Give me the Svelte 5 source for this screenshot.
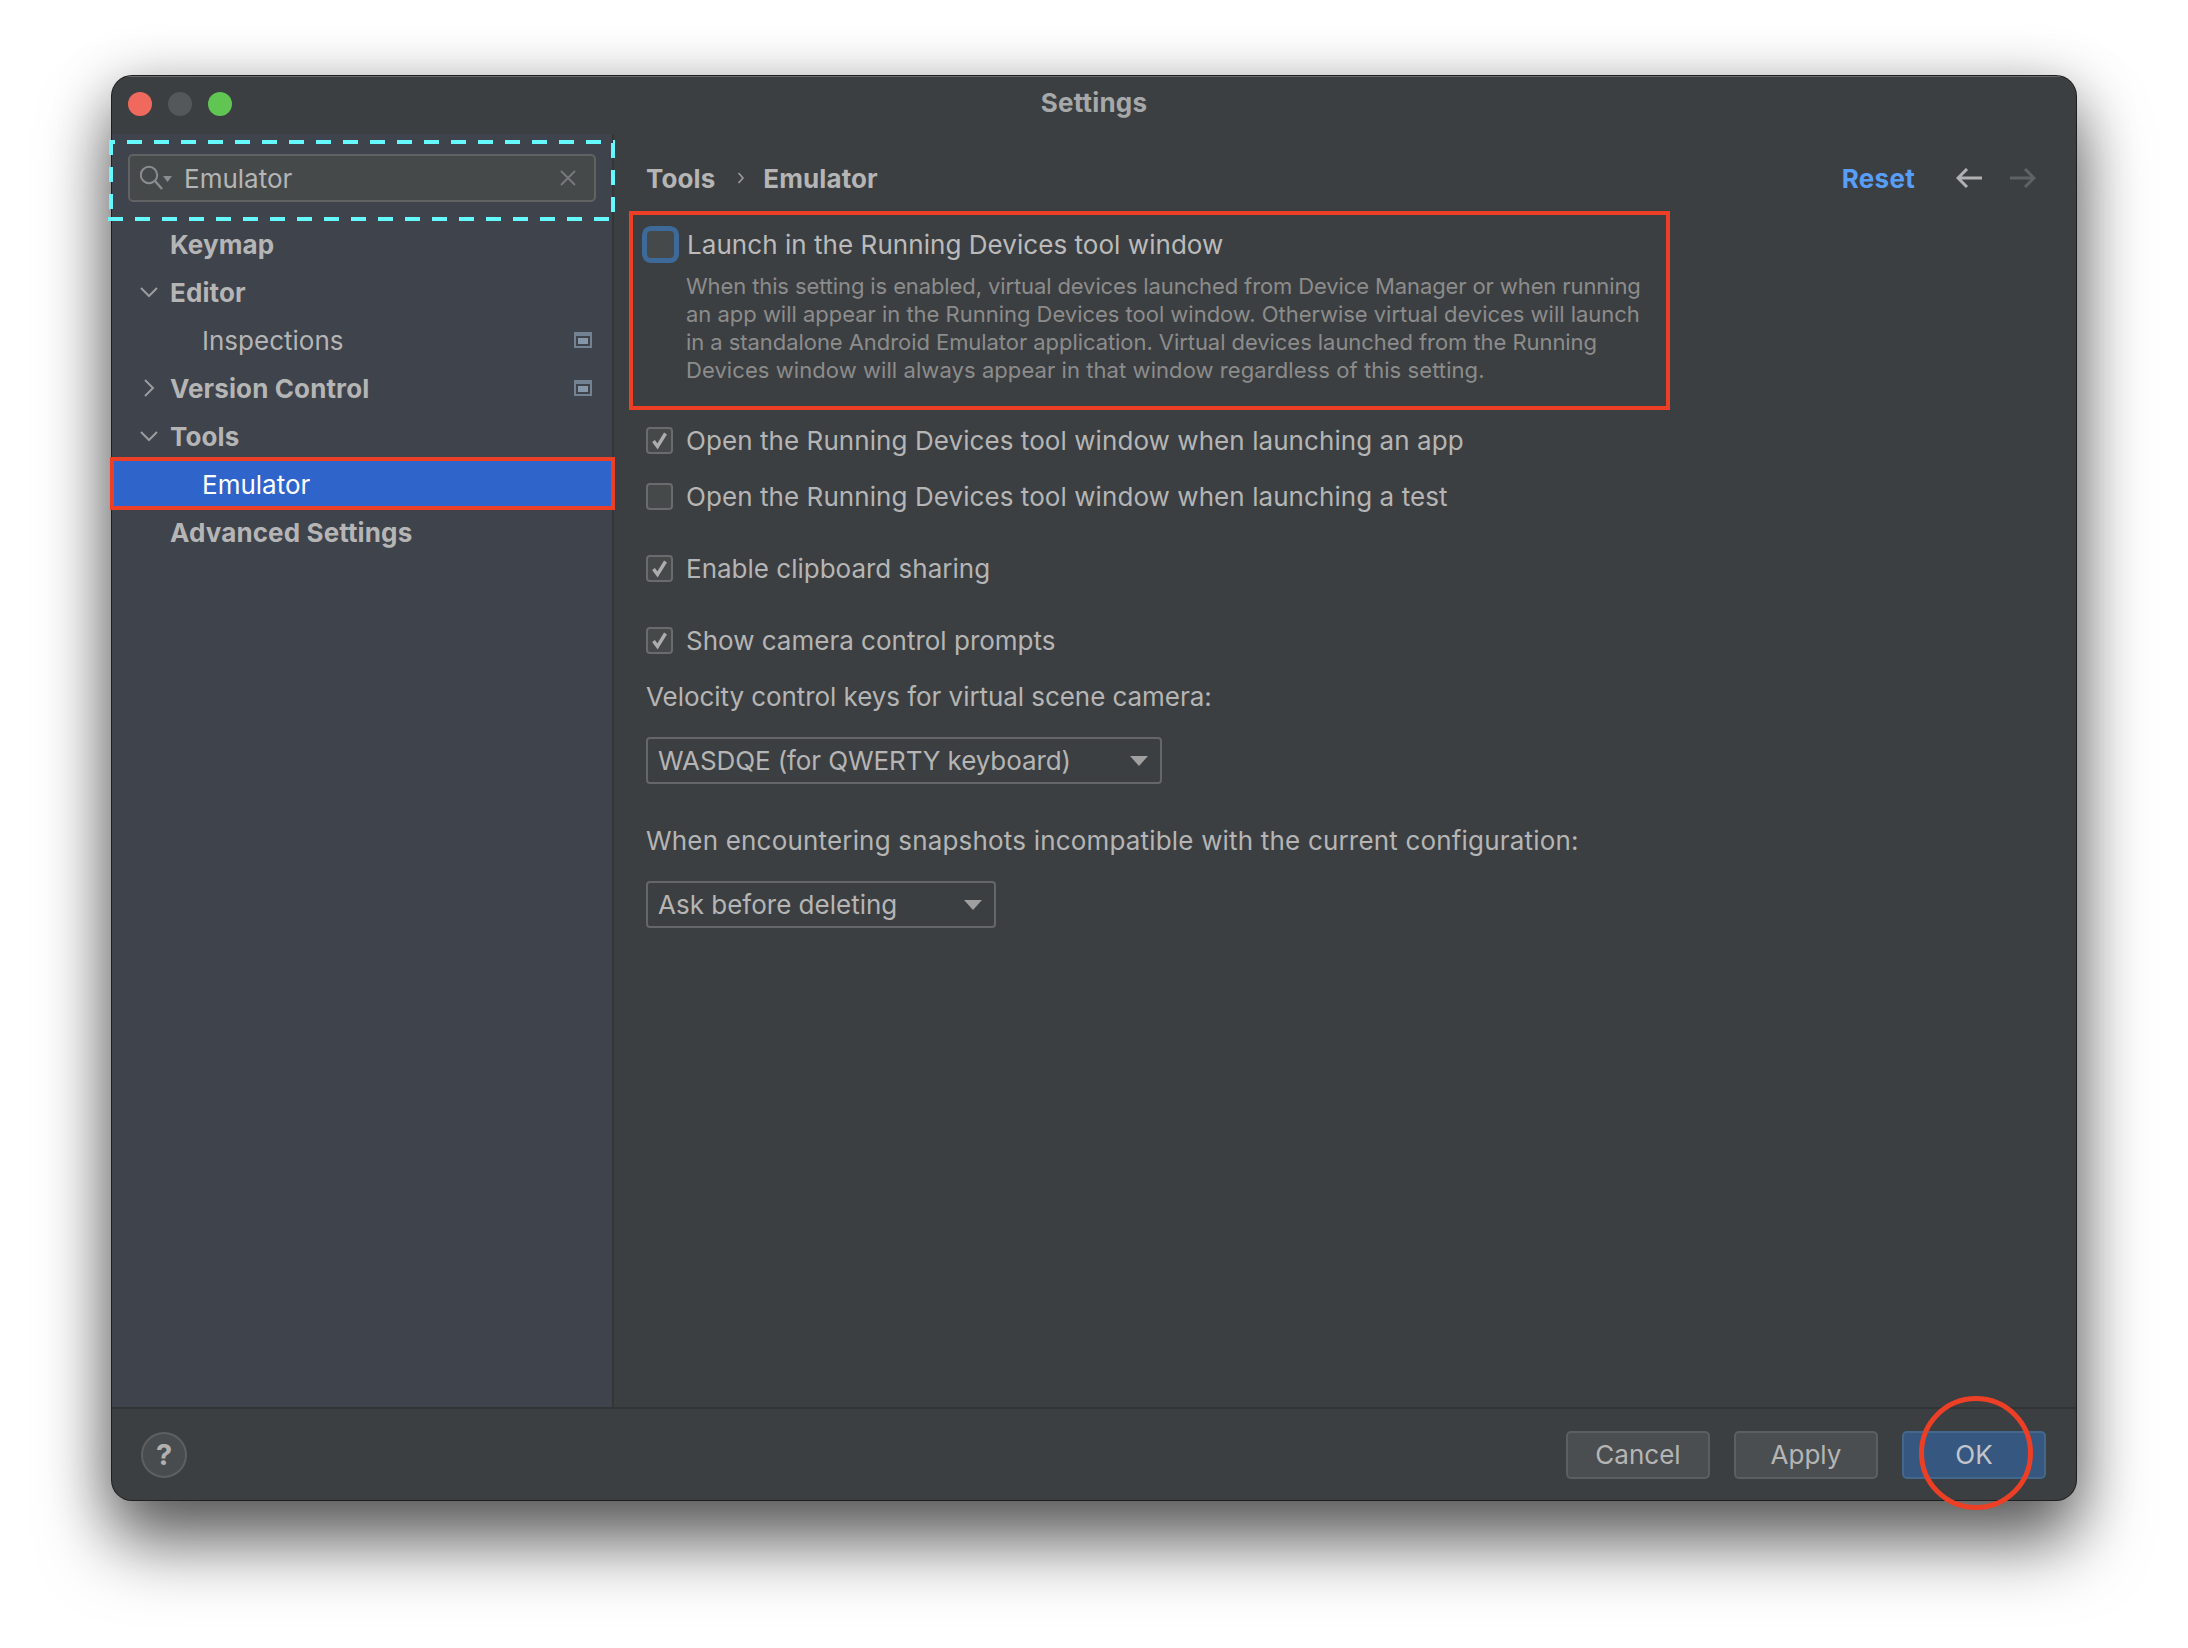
<script lang="ts">
	const tree = [
		{ label: 'Keymap', bold: true },
		{ label: 'Editor', bold: true, chevron: 'down' },
		{ label: 'Inspections', scope: true },
		{ label: 'Version Control', bold: true, chevron: 'right', scope: true },
		{ label: 'Tools', bold: true, chevron: 'down' },
		{ label: 'Emulator', selected: true },
		{ label: 'Advanced Settings', bold: true }
	];

	const description = [
		'When this setting is enabled, virtual devices launched from Device Manager or when running',
		'an app will appear in the Running Devices tool window. Otherwise virtual devices will launch',
		'in a standalone Android Emulator application. Virtual devices launched from the Running',
		'Devices window will always appear in that window regardless of this setting.'
	];
</script>

{#snippet check(checked: boolean, label: string)}
	<label class="check-row">
		<span class="box">
			{#if checked}
				<svg width="27" height="27" viewBox="0 0 27 27" fill="none">
					<path d="M7.5 14l4 5.5L19.5 6.5" stroke="#adadad" stroke-width="3.400" />
				</svg>
			{/if}
		</span>
		<span>{label}</span>
	</label>
{/snippet}

{#snippet combo(label: string)}
	<div class="combo">
		<span>{label}</span>
		<svg width="18" height="10" viewBox="0 0 18 10"><path d="M0 0h18L9 10z" fill="#a0a0a0" /></svg>
	</div>
{/snippet}

<div class="page">
	<div class="window">
		<header class="titlebar">
			<span class="light red"></span>
			<span class="light gray"></span>
			<span class="light green"></span>
			<span class="title">Settings</span>
		</header>

		<div class="body">
			<aside class="sidebar">
				<div class="search">
					<svg class="search-icon" width="34" height="26" viewBox="0 0 34 26" fill="none">
						<circle cx="9" cy="10" r="8.200" stroke="#8a8d8f" stroke-width="2" />
						<path d="M15 16l7 8" stroke="#8a8d8f" stroke-width="2.400" />
						<path d="M23 11h9l-4.500 6z" fill="#8a8d8f" />
					</svg>
					<span class="search-text">Emulator</span>
					<svg class="clear" width="16" height="16" viewBox="0 0 16 16" fill="none">
						<path d="M1 1l14 14M15 1L1 15" stroke="#777a7c" stroke-width="1.800" />
					</svg>
				</div>

				<nav class="tree">
					{#each tree as item}
						<div class="node" class:bold={item.bold} class:selected={item.selected}>
							{#if item.chevron === 'down'}
								<svg class="chevron" width="18" height="12" viewBox="0 0 18 12" fill="none">
									<path d="M1 2l8 8 8-8" stroke="#9a9c9e" stroke-width="2" />
								</svg>
							{:else if item.chevron === 'right'}
								<svg class="chevron" width="18" height="18" viewBox="0 0 18 18" fill="none">
									<path d="M5 1l8 8-8 8" stroke="#9a9c9e" stroke-width="2" />
								</svg>
							{/if}
							<span>{item.label}</span>
							{#if item.scope}
								<svg class="scope" width="18" height="16" viewBox="0 0 18 16">
									<path fill-rule="evenodd" d="M0 0h18v16H0zM2 4v10h14V4z" fill="#728292" />
									<rect x="4" y="6" width="10" height="6" fill="#8496a8" />
								</svg>
							{/if}
						</div>
					{/each}
				</nav>
			</aside>

			<main class="content">
				<div class="crumbs">
					<b>Tools</b>
					<svg class="sep" width="8" height="14" viewBox="0 0 8 14" fill="none">
						<path d="M1.500 2l4.500 5-4.500 5" stroke="#9a9c9e" stroke-width="1.600" />
					</svg>
					<b>Emulator</b>
					<b class="reset">Reset</b>
					<svg class="arrow" width="26" height="20" viewBox="0 0 26 20" fill="none">
						<path d="M26 10H3M11 1l-9 9 9 9" stroke="#afb1b3" stroke-width="3" />
					</svg>
					<svg class="arrow next" width="26" height="20" viewBox="0 0 26 20" fill="none">
						<path d="M0 10h23M15 1l9 9-9 9" stroke="#5f6264" stroke-width="3" />
					</svg>
				</div>

				<div class="setting-main">
					<span class="box focused"></span>
					<span>Launch in the Running Devices tool window</span>
				</div>
				<div class="description">
					{#each description as line}
						<div>{line}</div>
					{/each}
				</div>

				<div class="group-a">
					{@render check(true, 'Open the Running Devices tool window when launching an app')}
					{@render check(false, 'Open the Running Devices tool window when launching a test')}
				</div>
				<div class="group-b">{@render check(true, 'Enable clipboard sharing')}</div>
				<div class="group-b">{@render check(true, 'Show camera control prompts')}</div>

				<p class="field-label first">Velocity control keys for virtual scene camera:</p>
				<div class="wide">{@render combo('WASDQE (for QWERTY keyboard)')}</div>
				<p class="field-label second">When encountering snapshots incompatible with the current configuration:</p>
				<div class="narrow">{@render combo('Ask before deleting')}</div>
			</main>
		</div>

		<footer class="footer">
			<div class="help">?</div>
			<div class="buttons">
				<button>Cancel</button>
				<button>Apply</button>
				<button class="primary">OK</button>
			</div>
		</footer>
	</div>

	<!-- callouts drawn on top of the screenshot -->
	<svg class="marks" width="2188" height="1648" viewBox="0 0 2188 1648" fill="none">
		<g stroke="#66f8ff" stroke-width="4" stroke-dasharray="15 12">
			<line x1="109" y1="142" x2="615" y2="142" stroke-dashoffset="9" />
			<line x1="111" y1="140" x2="111" y2="220" />
			<line x1="613" y1="143" x2="613" y2="212" />
			<line x1="108" y1="219" x2="612" y2="219" />
		</g>
		<g stroke="#ed3f26" stroke-width="4">
			<rect x="112" y="459" width="501" height="49" />
			<rect x="631" y="213" width="1037" height="195" />
			<ellipse cx="1976" cy="1453" rx="54.500" ry="54.500" stroke-width="5" />
		</g>
	</svg>
</div>

<style>
	:global(body) {
		margin: 0;
		background: #fff;
	}

	.page {
		position: relative;
		width: 2188px;
		height: 1648px;
		padding: 76px 112px 148px 112px;
		box-sizing: border-box;
		overflow: hidden;
		font-family: Inter, 'Noto Sans', sans-serif;
		font-size: 26px;
		color: #b5b5b5;
	}

	.window {
		display: flex;
		flex-direction: column;
		height: 100%;
		border-radius: 20px;
		background: #3c3f41;
		overflow: hidden;
		box-shadow:
			0 0 0 1px #1f1f1f,
			0 44px 70px rgba(0, 0, 0, 0.55),
			0 10px 60px rgba(0, 0, 0, 0.3);
	}

	.titlebar {
		position: relative;
		display: flex;
		align-items: center;
		gap: 16px;
		height: 58px;
		padding: 0 0 2px 16px;
		box-sizing: border-box;
		flex: none;
		box-shadow: inset 0 1px 0 #6a6c6e;
	}

	.light {
		width: 24px;
		height: 24px;
		border-radius: 50%;
	}

	.red {
		background: #ef6a5d;
	}

	.gray {
		background: #54585b;
	}

	.green {
		background: #61c554;
	}

	.title {
		position: absolute;
		left: 0;
		right: 0;
		margin-top: -3px;
		text-align: center;
		font-weight: 700;
		letter-spacing: 0.2px;
		color: #a6a8a9;
	}

	.body {
		flex: 1;
		display: flex;
		min-height: 0;
	}

	.sidebar {
		width: 500px;
		flex: none;
		background: #3f434c;
		border-right: 2px solid #333537;
	}

	.search {
		display: flex;
		align-items: center;
		height: 48px;
		margin: 20px 16px 18px;
		padding: 0 18px 0 10px;
		box-sizing: border-box;
		background: #46494a;
		border: 2px solid #606264;
		border-radius: 5px;
	}

	.search-text {
		margin-left: 10px;
		flex: 1;
	}

	.node {
		position: relative;
		display: flex;
		align-items: center;
		height: 48px;
		padding-left: 90px;
	}

	.node.bold {
		padding-left: 58px;
		font-weight: 700;
		letter-spacing: 0.12px;
	}

	.node.selected {
		background: #2f65ca;
		color: #fff;
	}

	.chevron {
		position: absolute;
		left: 28px;
	}

	.scope {
		position: absolute;
		right: 20px;
	}

	.content {
		flex: 1;
		min-width: 0;
		padding: 0 40px 0 32px;
	}

	.crumbs {
		display: flex;
		align-items: center;
		height: 48px;
		margin-top: 20px;
		color: #b5b5b5;
	}

	.crumbs b {
		font-weight: 700;
		letter-spacing: 0.1px;
	}

	.sep {
		margin: 0 18px 0 22px;
	}

	.crumbs .reset {
		margin-left: auto;
		color: #589df6;
		font-weight: 700;
		letter-spacing: 0.3px;
	}

	.arrow {
		margin-left: 41px;
	}

	.arrow.next {
		margin-left: 28px;
	}

	.setting-main {
		display: flex;
		align-items: center;
		gap: 12px;
		margin-top: 27px;
		letter-spacing: 0.05px;
		color: #bbb;
	}

	.box {
		display: block;
		width: 27px;
		height: 27px;
		flex: none;
		box-sizing: border-box;
		background: #45494a;
		border: 2px solid #696b6d;
		border-radius: 4px;
	}

	.box svg {
		display: block;
		margin: -2px;
	}

	.box.focused {
		width: 27px;
		height: 27px;
		margin: 0 1px;
		border-color: #45494a;
		box-shadow: 0 0 0 5px #3e6a99;
	}

	.description {
		margin: 12px 0 0 40px;
		font-size: 22px;
		line-height: 28px;
		letter-spacing: -0.11px;
		white-space: nowrap;
		color: #8c8c8c;
	}

	/* line widths differ a little from the original font */
	.description div:nth-child(2) {
		letter-spacing: -0.02px;
	}

	.description div:nth-child(3) {
		letter-spacing: -0.06px;
	}

	.description div:nth-child(4) {
		letter-spacing: 0.07px;
	}

	.check-row {
		display: flex;
		align-items: center;
		gap: 13px;
		height: 32px;
	}

	.group-a {
		display: flex;
		flex-direction: column;
		gap: 24px;
		margin-top: 40px;
	}

	.group-a .check-row {
		letter-spacing: 0.07px;
	}

	.group-b {
		margin-top: 40px;
	}

	.field-label {
		margin: 0;
		line-height: 32px;
	}

	.field-label.first {
		margin-top: 25px;
		letter-spacing: -0.06px;
	}

	.field-label.second {
		margin-top: 41px;
		letter-spacing: 0.18px;
	}

	.wide {
		width: 516px;
		margin-top: 24px;
		letter-spacing: -0.1px;
	}

	.narrow {
		width: 350px;
		margin-top: 24px;
	}

	.combo {
		display: flex;
		align-items: center;
		justify-content: space-between;
		height: 47px;
		padding: 0 12px 0 10px;
		box-sizing: border-box;
		border: 2px solid #646668;
		border-radius: 4px;
		background: #3c3f41;
	}

	.footer {
		flex: none;
		display: flex;
		align-items: center;
		justify-content: space-between;
		height: 93px;
		padding: 0 30px 0 29px;
		box-sizing: border-box;
		border-top: 2px solid #323436;
	}

	.help {
		width: 46px;
		height: 46px;
		box-sizing: border-box;
		border-radius: 50%;
		border: 2px solid #5d6062;
		background: #494c4e;
		display: flex;
		align-items: center;
		justify-content: center;
		font-weight: 700;
		font-size: 29px;
		color: #b0b0b0;
	}

	.buttons {
		display: flex;
		gap: 24px;
	}

	button {
		width: 144px;
		height: 48px;
		padding: 0;
		font: inherit;
		color: #b5b5b5;
		background: #4b4e50;
		border: 2px solid #5c5f61;
		border-radius: 5px;
	}

	button.primary {
		background: #365880;
		border-color: #43688c;
		color: #c2c6ca;
	}

	.marks {
		position: absolute;
		inset: 0;
		pointer-events: none;
	}
</style>
